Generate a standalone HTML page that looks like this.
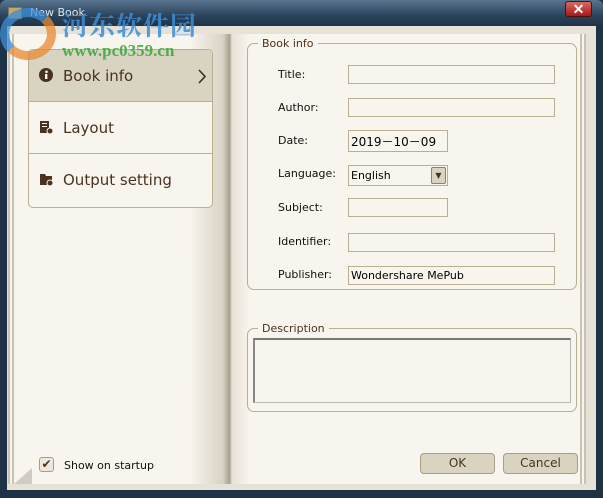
<!DOCTYPE html>
<html><head><style>
*{margin:0;padding:0;box-sizing:border-box}
body{width:603px;height:498px;overflow:hidden;background:#1f3346;font-family:Tahoma,"DejaVu Sans","Liberation Sans",sans-serif;font-size:11px;color:#111;position:relative}
.title{position:absolute;left:0;top:0;width:603px;height:26px;background:linear-gradient(#5a7590,#2b435b 60%,#1f3347);border-radius:6px 6px 0 0}
.close{position:absolute;left:565px;top:1px;width:27px;height:16px;background:linear-gradient(#d86a60,#a81818);border:1px solid #4a1010;border-radius:3px;color:#fff;font:bold 14px "Liberation Sans",sans-serif;text-align:center;line-height:14px}
.client{position:absolute;left:7px;top:26px;width:589px;height:464px;background:#e6e2d8}
.page{position:absolute;background:#f8f5ee}
.lp{left:8px;top:34px;width:222px;height:450px;border-left:6px double #c8c2b4}
.rp{left:232px;top:34px;width:354px;height:450px;border-right:6px double #c8c2b4}
.spine{position:absolute;left:190px;top:34px;width:60px;height:450px;background:linear-gradient(90deg,#f8f5ee,#d8d2c4 55%,#a8a090 66%,#e8e2d6 70%,#f8f5ee)}
.nav{position:absolute;left:28px;top:49px;width:185px;height:159px;border:1px solid #b8ae92;border-radius:5px;background:#f8f5ee;overflow:hidden}
.item{height:52px;border-bottom:1px solid #b8ae92;font-size:15px;color:#4a3220;display:flex;align-items:center;padding-left:34px;position:relative}
.item.sel{background:#d9d4c2}
.ic{position:absolute;left:10px;top:18px;width:14px;height:14px}
fieldset{position:absolute;border:1px solid #b8ae92;border-radius:7px}
legend{color:#4a3220;font-size:11px;padding:0 4px;margin-left:10px}
.lab{position:absolute;left:278px;font-size:11px}
.inp{position:absolute;left:348px;height:19px;border:1px solid #b8ae92;background:#f8f5ee;font-size:11px;padding:2px 2px;color:#000}
.btn{position:absolute;top:453px;height:21px;border:1px solid #a89e80;border-radius:4px;background:#d9d4c2;color:#4a3220;font-size:12px;text-align:center;line-height:19px}
</style></head><body>
<div class="title"></div>
<div style="position:absolute;left:8px;top:7px;width:14px;height:12px;background:#c9a860;border:1px solid #777"></div>
<div style="position:absolute;left:30px;top:6px;color:#dfe6ee;font-size:11px">New Book</div>
<div class="close">✕</div>
<div class="client"></div>
<div class="page lp"></div>
<div class="page rp"></div>
<div class="spine"></div>
<div class="nav">
<div class="item sel"><svg class="ic" viewBox="0 0 14 14"><circle cx="7" cy="7" r="7" fill="#4a3220"/><rect x="6" y="6" width="2.4" height="5" fill="#f8f5ee"/><circle cx="7.5" cy="3.8" r="1.3" fill="#f8f5ee"/></svg>Book info<svg style="position:absolute;right:6px;top:19px" width="8" height="15" viewBox="0 0 8 15"><path d="M1 1l6 6.5L1 14" fill="none" stroke="#333" stroke-width="1.6"/></svg></div>
<div class="item"><svg class="ic" viewBox="0 0 14 14"><rect x="1" y="1" width="9" height="12" fill="#4a3220"/><rect x="3" y="3" width="5" height="1" fill="#f8f5ee"/><rect x="3" y="6" width="5" height="1" fill="#f8f5ee"/><circle cx="11" cy="11" r="3" fill="#4a3220" stroke="#f8f5ee"/></svg>Layout</div>
<div class="item" style="border:0"><svg class="ic" viewBox="0 0 14 14"><path d="M1 2h5l1 2h6v9H1z" fill="#4a3220"/><circle cx="11" cy="11" r="3" fill="#4a3220" stroke="#f8f5ee"/></svg>Output setting</div>
</div>
<div style="position:absolute;left:0;top:8px;width:56px;height:52px;border-radius:50%;border:9px solid #3b8ed8;border-right-color:#e98a30;border-bottom-color:#e98a30;opacity:.75"></div>
<div style="position:absolute;left:62px;top:6px;font:bold 26px 'Noto Serif CJK SC',serif;color:#3b8ed8;opacity:.85;letter-spacing:1px">河东软件园</div>
<div style="position:absolute;left:62px;top:41px;font:bold 17px 'Liberation Serif',serif;color:#3aa63a;opacity:.85">www.pc0359.cn</div>
<fieldset style="left:247px;top:37px;width:330px;height:253px"><legend>Book info</legend></fieldset>
<div class="lab" style="top:68px">Title:</div><div class="inp" style="top:65px;width:207px"></div>
<div class="lab" style="top:101px">Author:</div><div class="inp" style="top:98px;width:207px"></div>
<div class="lab" style="top:134px">Date:</div><div class="inp" style="top:130px;width:100px;height:22px;font-size:12px">2019－10－09</div>
<div class="lab" style="top:167px">Language:</div><div class="inp" style="top:165px;width:100px;height:21px;padding-top:3px">English<span style="position:absolute;right:1px;top:1px;width:15px;height:17px;background:#d9d4c2;border:1px solid #8a8270;border-radius:2px;font-size:8px;text-align:center;line-height:15px;color:#4a3220">▼</span></div>
<div class="lab" style="top:201px">Subject:</div><div class="inp" style="top:198px;width:100px"></div>
<div class="lab" style="top:235px">Identifier:</div><div class="inp" style="top:233px;width:207px"></div>
<div class="lab" style="top:268px">Publisher:</div><div class="inp" style="top:266px;width:207px">Wondershare MePub</div>
<fieldset style="left:247px;top:322px;width:330px;height:90px"><legend>Description</legend></fieldset>
<div style="position:absolute;left:253px;top:338px;width:318px;height:65px;border:1px solid #b8b8b8;border-top:2px solid #777;border-left:2px solid #888;background:#f8f5ee"></div>
<div style="position:absolute;left:39px;top:457px;width:15px;height:15px;border:1px solid #a89e80;border-radius:3px;background:#ece8dc;color:#4a3220;font-size:12px;line-height:13px;text-align:center">✔</div>
<div style="position:absolute;left:64px;top:459px">Show on startup</div>
<div style="position:absolute;left:14px;top:468px;width:0;height:0;border-left:18px solid transparent;border-bottom:16px solid #d0ccc4"></div>
<div class="btn" style="left:420px;width:75px">OK</div>
<div class="btn" style="left:503px;width:75px">Cancel</div>
</body></html>
